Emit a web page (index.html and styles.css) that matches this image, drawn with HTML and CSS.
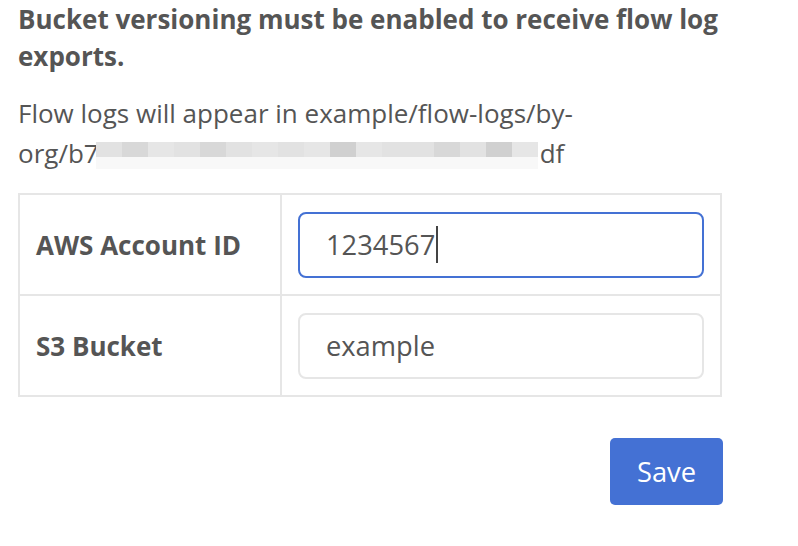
FILE: index.html
```html
<!DOCTYPE html>
<html lang="en">
<head>
<meta charset="utf-8">
<title>Flow log export</title>
<link rel="stylesheet" href="styles.css">
</head>
<body>
<main class="page">
  <h2 class="notice">Bucket versioning must be enabled to receive flow log exports.</h2>
  <p class="path">Flow logs will appear in example/flow-logs/by-<span class="path-tail">org/b7<span class="blur"><span class="bc c1"></span><span class="bc c2"></span><span class="bc c3"></span><span class="bc c1"></span><span class="bc c2"></span><span class="bc c1"></span><span class="bc c3"></span><span class="bc c1"></span><span class="bc c3"></span><span class="bc c4"></span><span class="bc c3"></span><span class="bc c1"></span><span class="bc c1"></span><span class="bc c2"></span><span class="bc c1"></span><span class="bc c4"></span><span class="bc c3"></span></span>df</span></p>
  <div class="form-table">
    <div class="cell label">AWS Account ID</div>
    <div class="cell control"><div class="field focused"><span>1234567</span><span class="caret"></span></div></div>
    <div class="cell label">S3 Bucket</div>
    <div class="cell control"><div class="field"><span>example</span></div></div>
  </div>
  <div class="actions"><button class="save" type="button">Save</button></div>
</main>
</body>
</html>
```
FILE: styles.css
```css
html, body {
  margin: 0;
  padding: 0;
  background: #ffffff;
}
body {
  font-family: "Open Sans", "Noto Sans", sans-serif;
  color: #555555;
}
.page {
  width: 705px;
  padding: 1px 0 0 18px;
}
.notice {
  margin: 0;
  font-size: 26px;
  font-weight: 700;
  line-height: 37px;
}
.path {
  margin: 18px 0 20px;
  font-size: 26px;
  line-height: 40px;
}
.path-tail {
  display: inline-block;
  white-space: nowrap;
}
.blur {
  display: inline-flex;
  vertical-align: -6px;
  height: 27px;
  margin: 0 2px 0 -3px;
}
.bc {
  width: 26px;
  height: 27px;
  box-sizing: border-box;
  border-bottom: 12px solid #f8f8f8;
}
.c1 { background: #e2e2e2; }
.c2 { background: #d8d8d8; }
.c3 { background: #e6e6e6; }
.c4 { background: #d0d0d0; }
.form-table {
  display: grid;
  grid-template-columns: 262px 1fr;
  grid-auto-rows: 101px;
  border-left: 2px solid #e6e6e6;
  border-top: 2px solid #e6e6e6;
  width: 702px;
}
.cell {
  box-sizing: border-box;
  border-right: 2px solid #e6e6e6;
  border-bottom: 2px solid #e6e6e6;
  display: flex;
  align-items: center;
}
.label {
  padding-left: 16px;
  font-size: 26px;
  font-weight: 700;
}
.control {
  padding: 0 16px;
}
.field {
  flex: 1;
  box-sizing: border-box;
  height: 66px;
  border: 2px solid #e6e6e6;
  border-radius: 8px;
  padding-left: 26px;
  display: flex;
  align-items: center;
  font-size: 27.3px;
  color: #555555;
}
.field.focused {
  border-color: #4471d4;
}
.caret {
  width: 2px;
  height: 37px;
  background: #444444;
  margin-left: 1px;
}
.actions {
  display: flex;
  justify-content: flex-end;
  margin-top: 41px;
}
.save {
  width: 113px;
  height: 67px;
  border: none;
  border-radius: 5px;
  background: #4471d4;
  color: #ffffff;
  font-family: "Open Sans", "Noto Sans", sans-serif;
  font-size: 27.3px;
  padding: 0;
}
```
